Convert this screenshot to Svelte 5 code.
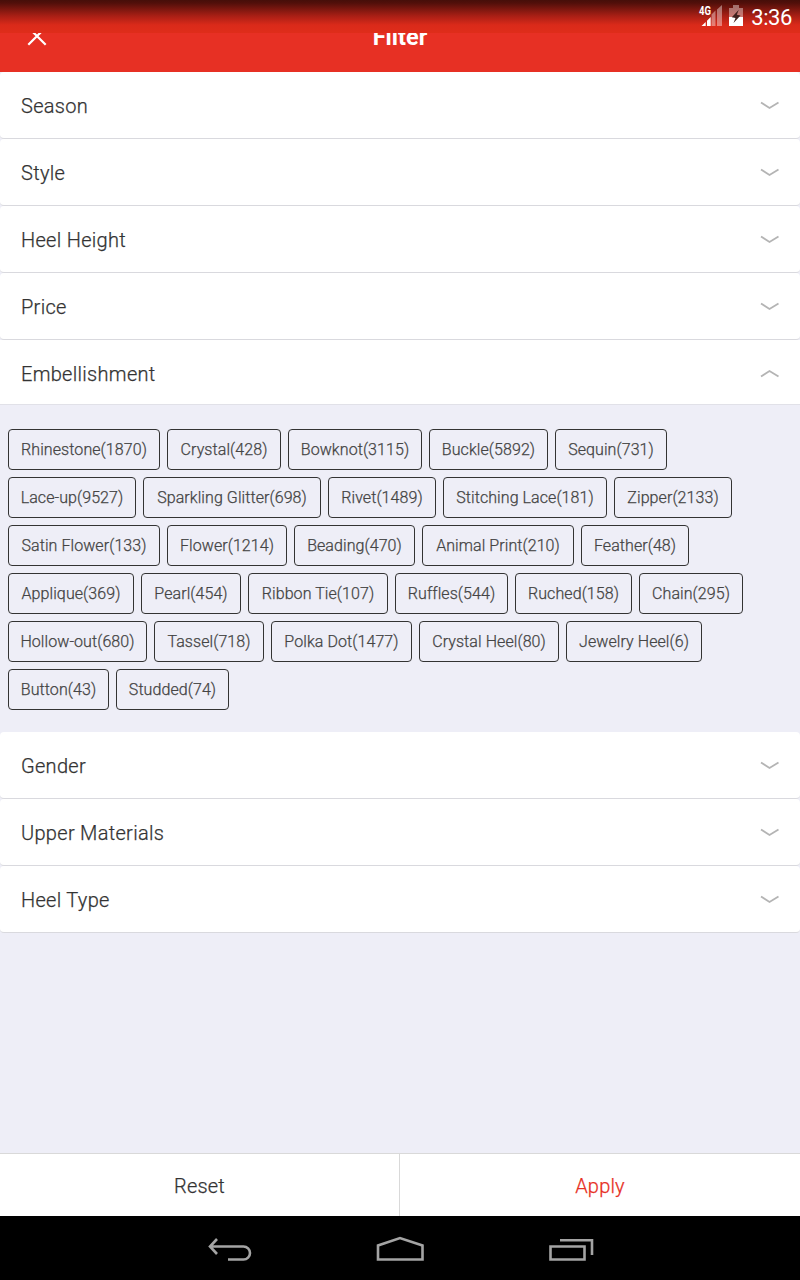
<script>
  const before = ['Season', 'Style', 'Heel Height', 'Price'];
  const after = ['Gender', 'Upper Materials', 'Heel Type'];
  const chipRows = [
    [['Rhinestone(1870)', 152], ['Crystal(428)', 114], ['Bowknot(3115)', 134], ['Buckle(5892)', 119], ['Sequin(731)', 112]],
    [['Lace-up(9527)', 128], ['Sparkling Glitter(698)', 178], ['Rivet(1489)', 108], ['Stitching Lace(181)', 164], ['Zipper(2133)', 118]],
    [['Satin Flower(133)', 152], ['Flower(1214)', 120], ['Beading(470)', 121], ['Animal Print(210)', 152], ['Feather(48)', 108]],
    [['Applique(369)', 126], ['Pearl(454)', 100], ['Ribbon Tie(107)', 140], ['Ruffles(544)', 113], ['Ruched(158)', 117], ['Chain(295)', 104]],
    [['Hollow-out(680)', 139], ['Tassel(718)', 110], ['Polka Dot(1477)', 141], ['Crystal Heel(80)', 140], ['Jewelry Heel(6)', 136]],
    [['Button(43)', 101], ['Studded(74)', 113]]
  ];
</script>

{#snippet row(label, open)}
  <div class="row" class:open>
    <span>{label}</span>
    <svg class="chevron" width="20" height="10" viewBox="0 0 20 10">
      <path d={open ? 'M1 7.5 9.5 2 18.500 7.500' : 'M1 1.5 9.500 7 18.500 1.500'} />
    </svg>
  </div>
{/snippet}

<div class="screen">
  <div class="status">
    <svg class="signal" width="24" height="22" viewBox="0 0 24 22">
      <g fill="#fff" fill-opacity=".4">
        <path d="M12.5 9.5 16.5 5.500V21h-4zM18 4.500 23 0V21h-5z" />
      </g>
      <path d="M2.5 21 6.7 17v4zM8 15.8 11.7 12v9H8z" fill="#fff" />
      <text x="0" y="10" textLength="12" lengthAdjust="spacingAndGlyphs">4G</text>
    </svg>
    <svg class="battery" width="14" height="21" viewBox="0 0 14 21">
      <path d="M0 3h4V0h6v3h4v9H0z" fill="#fff" fill-opacity=".4" />
      <path d="M0 12h14v9H0z" fill="#fff" />
      <path d="M9.8 4.8 2.8 12.2 6.5 13 4.5 18 11.5 10.5 7.8 9.7z" fill="#40201c" />
    </svg>
    <span>3:36</span>
  </div>
  <header>
    <svg class="close" width="20" height="20" viewBox="0 0 20 20"><path d="M1.3 .4 18.7 17.8M18.7 .4 1.3 17.8" /></svg>
    <h1>Filter</h1>
  </header>
  <main>
    {#each before as label}{@render row(label, false)}{/each}
    {@render row('Embellishment', true)}
    <div class="chips">
      {#each chipRows as chips}
        <div class="chip-row">
          {#each chips as [label, width]}
            <div class="chip" style:width="{width}px">{label}</div>
          {/each}
        </div>
      {/each}
    </div>
    {#each after as label}{@render row(label, false)}{/each}
  </main>
  <footer>
    <div class="reset">Reset</div>
    <div class="apply">Apply</div>
  </footer>
  <nav>
    <svg width="800" height="64" viewBox="0 0 800 64">
      <path d="M210 30.5H243.500a6.5 6.5 0 0 1 0 13H228M217 23 210 30.5 217 38" />
      <path d="M378 43.500V29.500L400 22 422.500 29.500V43.500z" />
      <path d="M550.500 30.500H584.500V43.500H550.500zM560 24.200H592V39" />
    </svg>
  </nav>
</div>

<style>
  :global(body) { margin: 0; background: #eeeef7; }
  .screen {
    display: flex; flex-direction: column; width: 800px; height: 1280px;
    overflow: hidden; background: #eeeef7; color: #333;
    font-family: Roboto, sans-serif; font-size: 20px; font-weight: 300;
  }
  .status {
    display: flex; align-items: flex-start; justify-content: flex-end;
    box-sizing: border-box; height: 33px; flex: none; padding: 5px 8px 0 0;
    background: linear-gradient(#460e09 0, #510f0a 3px, #a91f15 16px, #da2a1a 25px, #df2d1a 33px);
    color: #fff; font-weight: 400;
  }
  .signal { margin-right: 6px; overflow: visible; }
  .signal text { font: bold 13.5px Roboto, sans-serif; fill: #fff; }
  .battery { margin-right: 8px; }
  .status span { font-size: 22px; line-height: 26px; letter-spacing: -.4px; }
  header { height: 39px; flex: none; position: relative; overflow: hidden; background: #e73024; }
  .close { position: absolute; left: 27px; top: -6px; fill: none; stroke: #fff; stroke-width: 2.2; }
  h1 {
    position: absolute; left: 0; right: 0; top: -10px; margin: 0;
    text-align: center; color: #fff; font-size: 23.5px; line-height: 28px; font-weight: 700;
  }
  main { flex: 1; }
  .row {
    box-sizing: border-box; display: flex; align-items: center; justify-content: space-between;
    height: 67px; padding: 1px 20px 0 21px; background: #fff; border-bottom: 1px solid #d9d9de; border-radius: 4px;
    letter-spacing: .3px;
  }
  .row, .chip, footer { -webkit-text-stroke-width: .25px; }
  .row.open { height: 65px; padding-top: 3px; border-radius: 0; border-color: #e1e1e8; }
  .chevron { fill: none; stroke: #b4b4b4; stroke-width: 1.8; }
  .chips { box-sizing: border-box; height: 327px; padding: 24px 8px 0; display: flex; flex-direction: column; gap: 7px; }
  .chip-row { display: flex; gap: 7px; }
  .chip {
    box-sizing: border-box; height: 41px; line-height: 39px; border: 1px solid #333;
    border-radius: 4px; text-align: center; white-space: nowrap; font-size: 16px; color: #444; letter-spacing: .08px;
  }
  footer { display: flex; flex: none; height: 62px; background: #fff; border-top: 1px solid #d9d9d9; line-height: 64px; text-align: center; letter-spacing: .2px; }
  .reset { width: 399px; border-right: 1px solid #d9d9d9; }
  .apply { width: 400px; color: #e73024; }
  nav { height: 64px; flex: none; background: #000; }
  nav svg { display: block; fill: none; stroke: #a4a4a4; stroke-width: 2.6; }
</style>
